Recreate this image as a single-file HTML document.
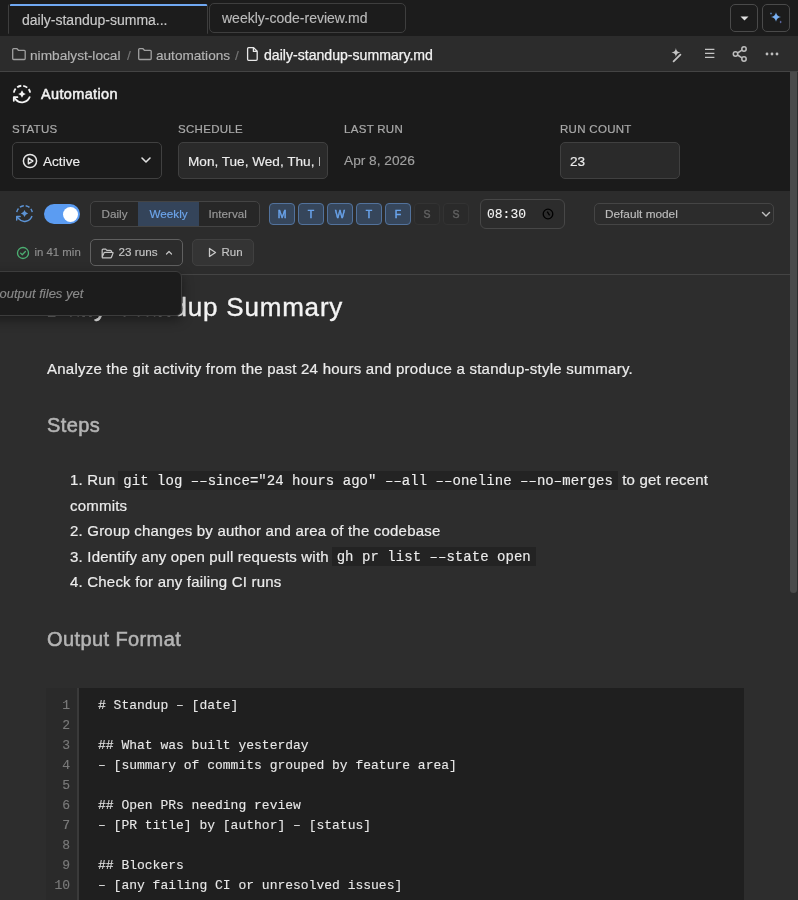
<!DOCTYPE html>
<html><head><meta charset="utf-8">
<style>
*{box-sizing:border-box;margin:0;padding:0}
html,body{width:798px;height:900px;overflow:hidden;-webkit-font-smoothing:antialiased;background:#2d2d2d;font-family:"Liberation Sans",sans-serif;color:#e0e0e0}
.abs{position:absolute}
.nw{white-space:nowrap}
#tabbar{position:absolute;left:0;top:0;width:798px;height:36px;background:#1c1c1c}
.tab{position:absolute;top:3px;height:30px;border:1px solid #3e3e3e;border-radius:5px;color:#cacaca;font-size:14px}
.tab span{position:absolute;top:6px}
#crumb{position:absolute;left:0;top:36px;width:798px;height:36px;background:#2c2c2c;border-bottom:1px solid #444}
#auto{position:absolute;left:0;top:72px;width:790px;height:119px;background:#1b1b1b}
#tool{position:absolute;left:0;top:191px;width:790px;height:84px;z-index:1;background:#2c2c2c;border-bottom:1px solid #444}
#content{position:absolute;left:0;top:274px;width:790px;height:626px;background:#2d2d2d}
#sb{position:absolute;left:790px;top:72px;width:8px;height:828px;background:#2d2d2d}
#thumb{position:absolute;left:790px;top:72px;width:7px;height:521px;background:#4a4a4a;border-radius:0 0 4px 4px}
.lbl{position:absolute;top:50px;font-size:11.5px;letter-spacing:0.3px;color:#a9a9a9;-webkit-text-stroke:0.2px #a9a9a9}
code{font-family:"Liberation Mono",monospace;font-size:14px;background:#232323;padding:1.5px 5px 1.5px;vertical-align:1px;letter-spacing:0.04px;line-height:1;margin-left:-1.5px;-webkit-text-stroke:0.15px #e6e6e6}
.box{position:absolute;top:70px;height:37px;border:1px solid #404040;border-radius:5px}
</style></head><body><div id="root" style="position:absolute;left:0;top:0;width:798px;height:900px;will-change:transform;-webkit-text-stroke-width:0.15px">

<div id="tabbar">
  <div class="tab" style="left:8px;width:200px;border-top:none;border-bottom:none;border-radius:2px 2px 1px 1px;height:30px;top:4px;background:#1c1c1c"><span style="left:13px;top:7.5px">daily-standup-summa...</span></div>
  <div class="abs" style="left:9.5px;top:4px;width:197px;height:2px;background:#70a8f2;border-radius:1px 1px 0 0"></div>
  <div class="tab" style="left:209px;width:197px"><span style="left:12px;color:#bababa">weekly-code-review.md</span></div>
  <div class="abs" style="left:730px;top:4px;width:28px;height:28px;border:1px solid #4a4a4a;border-radius:5px">
    <svg class="abs" style="left:9px;top:11px" width="9" height="5" viewBox="0 0 9 5"><path d="M0.5 0.5 H8.5 L4.5 4.5 Z" fill="#e0e0e0"/></svg>
  </div>
  <div class="abs" style="left:762px;top:4px;width:28px;height:28px;border:1px solid #4a4a4a;border-radius:5px">
    <svg class="abs" style="left:5px;top:5px" width="18" height="18" viewBox="0 0 18 18"><path d="M8 2.2 Q8.6 6.4 13 7 Q8.6 7.6 8 11.8 Q7.4 7.6 3 7 Q7.4 6.4 8 2.2Z" fill="#78b0f4"/><path d="M3 2 Q3.2 3.3 4.2 3.5 Q3.2 3.7 3 5 Q2.8 3.7 1.8 3.5 Q2.8 3.3 3 2Z" fill="#5a86c0"/><path d="M12.7 10.6 Q12.9 11.8 13.9 12 Q12.9 12.2 12.7 13.4 Q12.5 12.2 11.5 12 Q12.5 11.8 12.7 10.6Z" fill="#6a78c0"/></svg>
  </div>
</div>

<div id="crumb">
  <svg class="abs" style="left:11px;top:11px" width="16" height="14" viewBox="0 0 16 14" fill="none" stroke="#a0a0a0" stroke-width="1.3" stroke-linejoin="round"><path d="M1.7 2.6 Q1.7 1.7 2.6 1.7 H6 L7.4 3.3 H13.3 Q14.2 3.3 14.2 4.2 V11.6 Q14.2 12.5 13.3 12.5 H2.6 Q1.7 12.5 1.7 11.6 Z"/></svg>
  <span class="abs nw" style="left:30px;top:11.5px;font-size:13.7px;color:#b4b4b4">nimbalyst-local</span>
  <span class="abs nw" style="left:127px;top:11.5px;font-size:13.7px;color:#777">/</span>
  <svg class="abs" style="left:137px;top:11px" width="16" height="14" viewBox="0 0 16 14" fill="none" stroke="#a0a0a0" stroke-width="1.3" stroke-linejoin="round"><path d="M1.7 2.6 Q1.7 1.7 2.6 1.7 H6 L7.4 3.3 H13.3 Q14.2 3.3 14.2 4.2 V11.6 Q14.2 12.5 13.3 12.5 H2.6 Q1.7 12.5 1.7 11.6 Z"/></svg>
  <span class="abs nw" style="left:156px;top:11.5px;font-size:13.6px;color:#b4b4b4">automations</span>
  <span class="abs nw" style="left:235px;top:11.5px;font-size:13.7px;color:#777">/</span>
  <svg class="abs" style="left:246px;top:10px" width="13" height="16" viewBox="0 0 13 16" fill="none" stroke="#e8e8e8" stroke-width="1.3" stroke-linejoin="round"><path d="M2.6 1.6 H7.6 L11.2 5.2 V13.2 Q11.2 14.3 10.1 14.3 H2.6 Q1.6 14.3 1.6 13.2 V2.7 Q1.6 1.6 2.6 1.6 Z M7.4 1.8 V5.4 H11"/></svg>
  <span class="abs nw" style="left:264px;top:11px;font-size:14.1px;color:#f2f2f2;-webkit-text-stroke:0.25px #f2f2f2">daily-standup-summary.md</span>
  <svg class="abs" style="left:668px;top:10px" width="16" height="17" viewBox="0 0 16 17"><path d="M7.9 2 Q8.25 6.15 12.4 6.5 Q8.25 6.85 7.9 11 Q7.55 6.85 3.4 6.5 Q7.55 6.15 7.9 2Z" fill="#c4c4c4"/><path d="M12.4 8.6 L5.6 15.4" stroke="#c4c4c4" stroke-width="1.8" stroke-linecap="round"/></svg>
  <svg class="abs" style="left:703px;top:10px" width="14" height="14" viewBox="0 0 14 14" fill="none" stroke="#c4c4c4" stroke-width="1.2"><path d="M2 3.4 H11.4 M2 7.4 H11.4 M2 11.3 H11.4"/></svg>
  <svg class="abs" style="left:731px;top:9px" width="18" height="18" viewBox="0 0 18 18" fill="none" stroke="#bdbdbd" stroke-width="1.5"><circle cx="13" cy="4" r="2.2"/><circle cx="4.5" cy="9" r="2.2"/><circle cx="13" cy="14" r="2.2"/><path d="M6.5 8 L11 5.1 M6.5 10 L11 12.9"/></svg>
  <svg class="abs" style="left:764px;top:15px" width="16" height="6" viewBox="0 0 16 6" fill="#bdbdbd"><circle cx="3" cy="3" r="1.4"/><circle cx="8" cy="3" r="1.4"/><circle cx="13" cy="3" r="1.4"/></svg>
</div>
<div id="auto">
  <svg class="abs" style="left:12px;top:12px" width="20" height="20" viewBox="0 0 20 20" fill="none" stroke="#f4f4f4" stroke-width="1.8" stroke-linecap="butt"><path d="M1.83 8.56 A8.3 8.3 0 0 1 18.17 8.56" stroke-dasharray="4.3 2"/><path d="M17.89 12.56 A8.3 8.3 0 0 1 3.64 15.34 L1.8 13.2"/><path d="M1.8 13.2 H5.4 M1.8 13.2 V16.8" stroke-linecap="round"/><path d="M10 6.2 Q10.8 9.2 13.8 10 Q10.8 10.8 10 13.8 Q9.2 10.8 6.2 10 Q9.2 9.2 10 6.2Z" fill="#f4f4f4" stroke="none"/></svg>
  <span class="abs nw" style="left:41px;top:14px;font-size:14.5px;color:#f2f2f2;letter-spacing:0.35px;-webkit-text-stroke:0.5px #f2f2f2">Automation</span>
  <span class="abs nw lbl" style="left:12px;top:51px">STATUS</span>
  <span class="abs nw lbl" style="left:178px;top:51px">SCHEDULE</span>
  <span class="abs nw lbl" style="left:344px;top:51px">LAST RUN</span>
  <span class="abs nw lbl" style="left:560px;top:51px">RUN COUNT</span>
  <div class="box" style="left:12px;width:150px;background:#1b1b1b">
    <svg class="abs" style="left:9px;top:10px" width="16" height="16" viewBox="0 0 16 16" fill="none" stroke="#e6e6e6" stroke-width="1.5"><circle cx="8" cy="8" r="6.6"/><path d="M6.4 5.2 L10.8 8 L6.4 10.8 Z" stroke-linejoin="round"/></svg>
    <span class="abs nw" style="left:30px;top:10.5px;font-size:13.6px;color:#ececec">Active</span>
    <svg class="abs" style="left:127px;top:13px" width="12" height="8" viewBox="0 0 12 8" fill="none" stroke="#e0e0e0" stroke-width="1.6" stroke-linecap="round" stroke-linejoin="round"><path d="M2 2 L6 6 L10 2"/></svg>
  </div>
  <div class="box" style="left:178px;width:150px;background:#2a2a2a;overflow:hidden">
    <span class="abs nw" style="left:9px;top:10.5px;font-size:13.6px;color:#ececec;clip-path:inset(0 0 0 0);width:132px;overflow:hidden">Mon, Tue, Wed, Thu, Fri</span>
  </div>
  <span class="abs nw" style="left:344px;top:81px;font-size:13.7px;color:#a0a0a0">Apr 8, 2026</span>
  <div class="box" style="left:560px;width:120px;background:#2a2a2a">
    <span class="abs nw" style="left:9px;top:10.5px;font-size:13.6px;color:#ececec">23</span>
  </div>
</div>
<div id="tool">
  <svg class="abs" style="left:15px;top:13px" width="19" height="19" viewBox="0 0 20 20" fill="none" stroke="#5d94d6" stroke-width="1.5" stroke-linecap="butt"><path d="M1.83 8.56 A8.3 8.3 0 0 1 18.17 8.56" stroke-dasharray="4.3 2"/><path d="M17.89 12.56 A8.3 8.3 0 0 1 3.64 15.34 L1.8 13.2"/><path d="M1.8 13.2 H5.4 M1.8 13.2 V16.8" stroke-linecap="round"/><path d="M10 6.2 Q10.8 9.2 13.8 10 Q10.8 10.8 10 13.8 Q9.2 10.8 6.2 10 Q9.2 9.2 10 6.2Z" fill="#5d94d6" stroke="none"/></svg>
  <div class="abs" style="left:44px;top:13px;width:36px;height:20px;border-radius:10px;background:#5b9cf2"></div>
  <div class="abs" style="left:62.5px;top:15.5px;width:15px;height:15px;border-radius:50%;background:#fff"></div>
  <div class="abs" style="left:90px;top:10px;width:170px;height:26px;border:1px solid #444;border-radius:5px;background:#272727;overflow:hidden">
    <div class="abs" style="left:46.5px;top:0;width:61px;height:24px;background:#34445a"></div>
    <span class="abs nw" style="left:10.5px;top:4.5px;font-size:11.7px;color:#9a9a9a">Daily</span>
    <span class="abs nw" style="left:58.5px;top:4.5px;font-size:11.7px;color:#6ea6ec">Weekly</span>
    <span class="abs nw" style="left:117.5px;top:4.5px;font-size:11.7px;color:#9a9a9a">Interval</span>
  </div>
    <div class="abs" style="left:269px;top:12px;width:26px;height:22px;border:1px solid #52729c;border-radius:4px;background:#36465b;text-align:center;font-size:10.5px;color:#6aa5ee;-webkit-text-stroke:0.45px #6aa5ee;line-height:21px">M</div>
  <div class="abs" style="left:298px;top:12px;width:26px;height:22px;border:1px solid #52729c;border-radius:4px;background:#36465b;text-align:center;font-size:10.5px;color:#6aa5ee;-webkit-text-stroke:0.45px #6aa5ee;line-height:21px">T</div>
  <div class="abs" style="left:327px;top:12px;width:26px;height:22px;border:1px solid #52729c;border-radius:4px;background:#36465b;text-align:center;font-size:10.5px;color:#6aa5ee;-webkit-text-stroke:0.45px #6aa5ee;line-height:21px">W</div>
  <div class="abs" style="left:356px;top:12px;width:26px;height:22px;border:1px solid #52729c;border-radius:4px;background:#36465b;text-align:center;font-size:10.5px;color:#6aa5ee;-webkit-text-stroke:0.45px #6aa5ee;line-height:21px">T</div>
  <div class="abs" style="left:385px;top:12px;width:26px;height:22px;border:1px solid #52729c;border-radius:4px;background:#36465b;text-align:center;font-size:10.5px;color:#6aa5ee;-webkit-text-stroke:0.45px #6aa5ee;line-height:21px">F</div>
  <div class="abs" style="left:414px;top:12px;width:26px;height:22px;border:1px solid #333;border-radius:4px;background:#2a2a2a;text-align:center;font-size:10.5px;color:#606060;-webkit-text-stroke:0.45px #606060;line-height:21px">S</div>
  <div class="abs" style="left:443px;top:12px;width:26px;height:22px;border:1px solid #333;border-radius:4px;background:#2a2a2a;text-align:center;font-size:10.5px;color:#606060;-webkit-text-stroke:0.45px #606060;line-height:21px">S</div>

  <div class="abs" style="left:480px;top:8px;width:85px;height:30px;border:1px solid #474747;border-radius:6px;background:#2c2c2c">
    <span class="abs nw" style="left:6px;top:6.5px;font-family:'Liberation Mono',monospace;font-size:13px;color:#f4f4f4;-webkit-text-stroke:0.1px #f4f4f4">08:30</span>
    <svg class="abs" style="left:61px;top:7.5px" width="12" height="12" viewBox="0 0 12 12" fill="none" stroke="#000" stroke-width="1.3"><circle cx="6" cy="6" r="4.8"/><path d="M5.2 3.6 L7.6 7.4"/></svg>
  </div>
  <div class="abs" style="left:594px;top:12px;width:180px;height:22px;border:1px solid #454545;border-radius:5px;background:#2c2c2c">
    <span class="abs nw" style="left:10px;top:2.5px;font-size:11.8px;color:#bdbdbd">Default model</span>
    <svg class="abs" style="left:166px;top:7px" width="10" height="7" viewBox="0 0 10 7" fill="none" stroke="#c0c0c0" stroke-width="1.4" stroke-linecap="round" stroke-linejoin="round"><path d="M1.5 1.5 L5 5 L8.5 1.5"/></svg>
  </div>
  <svg class="abs" style="left:16px;top:55px" width="14" height="14" viewBox="0 0 14 14" fill="none" stroke="#4caf72" stroke-width="1.3" stroke-linecap="round" stroke-linejoin="round"><circle cx="7" cy="7" r="5.5"/><path d="M4.6 7.1 L6.3 8.7 L9.4 5.5"/></svg>
  <span class="abs nw" style="left:34.5px;top:55px;font-size:11.4px;color:#8e8e8e">in 41 min</span>
  <div class="abs" style="left:90px;top:48px;width:93px;height:27px;border:1px solid #606060;border-radius:5px;background:#2c2c2c">
    <svg class="abs" style="left:10px;top:7.5px" width="13" height="11" viewBox="0 0 14 12" fill="none" stroke="#c4c4c4" stroke-width="1.35" stroke-linejoin="round"><path d="M1.2 9.8 V2.2 Q1.2 1.2 2.2 1.2 H5 L6.3 2.6 H10.3 Q11.3 2.6 11.3 3.6 V4.8 M1.2 9.8 L3 5.6 Q3.3 4.8 4.2 4.8 H12.4 Q13.3 4.8 13 5.6 L11.4 9.8 Q11.1 10.8 10.2 10.8 H1.6 Z"/></svg>
    <span class="abs nw" style="left:27.5px;top:4.5px;font-size:11.7px;color:#c4c4c4">23 runs</span>
    <svg class="abs" style="left:73.5px;top:9.5px" width="8" height="6" viewBox="0 0 8 6" fill="none" stroke="#c4c4c4" stroke-width="1.2" stroke-linecap="round" stroke-linejoin="round"><path d="M1.5 4 L4 1.5 L6.5 4"/></svg>
  </div>
  <div class="abs" style="left:192px;top:48px;width:62px;height:27px;border:1px solid #404040;border-radius:5px;background:#343434">
    <svg class="abs" style="left:15px;top:7px" width="9" height="11" viewBox="0 0 9 11" fill="none" stroke="#c8c8c8" stroke-width="1.3" stroke-linejoin="round"><path d="M1.5 1.5 L7.5 5.5 L1.5 9.5 Z"/></svg>
    <span class="abs nw" style="left:28.5px;top:5.6px;font-size:11.5px;color:#c4c4c4">Run</span>
  </div>
</div>
<div id="content">
  <div class="abs nw" style="left:46px;top:18px;font-size:26px;color:#f4f4f4;letter-spacing:0.8px;-webkit-text-stroke:0.35px #f4f4f4">Daily Standup Summary</div>
  <div class="abs nw" style="left:47px;top:86px;font-size:15px;color:#ececec;letter-spacing:0.25px;-webkit-text-stroke:0.2px #ececec">Analyze the git activity from the past 24 hours and produce a standup-style summary.</div>
  <div class="abs nw" style="left:47px;top:140px;font-size:20px;letter-spacing:0.4px;color:#b4b4b4;-webkit-text-stroke:0.55px #b4b4b4">Steps</div>
  <div class="abs nw" style="left:70px;top:193px;font-size:15px;color:#ececec;line-height:25.5px;letter-spacing:0.2px;-webkit-text-stroke:0.2px #ececec">
    <div>1. Run <code>git log ––since="24 hours ago" ––all ––oneline ––no–merges</code> to get recent</div>
    <div>commits</div>
    <div>2. Group changes by author and area of the codebase</div>
    <div>3. Identify any open pull requests with <code>gh pr list ––state open</code></div>
    <div>4. Check for any failing CI runs</div>
  </div>
  <div class="abs nw" style="left:47px;top:354px;font-size:20px;letter-spacing:0.4px;color:#b4b4b4;-webkit-text-stroke:0.55px #b4b4b4">Output Format</div>
  <div class="abs" style="left:46px;top:414px;width:31px;height:220px;background:#2a2a2a"></div>
  <div class="abs" style="left:77px;top:414px;width:1.5px;height:220px;background:#3a3a3a"></div>
  <div class="abs" style="left:78.5px;top:414px;width:665.5px;height:220px;background:#1f1f1f"></div>
  <div class="abs" style="left:50px;top:422px;width:20px;text-align:right;font-family:'Liberation Mono',monospace;font-size:13px;line-height:20px;color:#7a7a7a"><div>1</div><div>2</div><div>3</div><div>4</div><div>5</div><div>6</div><div>7</div><div>8</div><div>9</div><div>10</div></div>
  <div class="abs nw" style="left:98px;top:422px;font-family:'Liberation Mono',monospace;font-size:13px;line-height:20px;color:#e8e8e8;-webkit-text-stroke:0.1px #e8e8e8"><div># Standup – [date]</div><div>&nbsp;</div><div>## What was built yesterday</div><div>– [summary of commits grouped by feature area]</div><div>&nbsp;</div><div>## Open PRs needing review</div><div>– [PR title] by [author] – [status]</div><div>&nbsp;</div><div>## Blockers</div><div>– [any failing CI or unresolved issues]</div></div>
</div>
<div class="abs" style="z-index:2;left:-20px;top:271px;width:202px;height:45px;border:1px solid #3c3c3c;border-radius:6px;background:#1c1c1c;box-shadow:0 4px 12px rgba(0,0,0,0.4)">
  <span class="abs nw" style="left:18.5px;top:14px;font-size:13px;font-style:italic;color:#8a8a8a">output files yet</span>
</div>
<div id="sb"></div>
<div id="thumb"></div>

</div></body></html>
